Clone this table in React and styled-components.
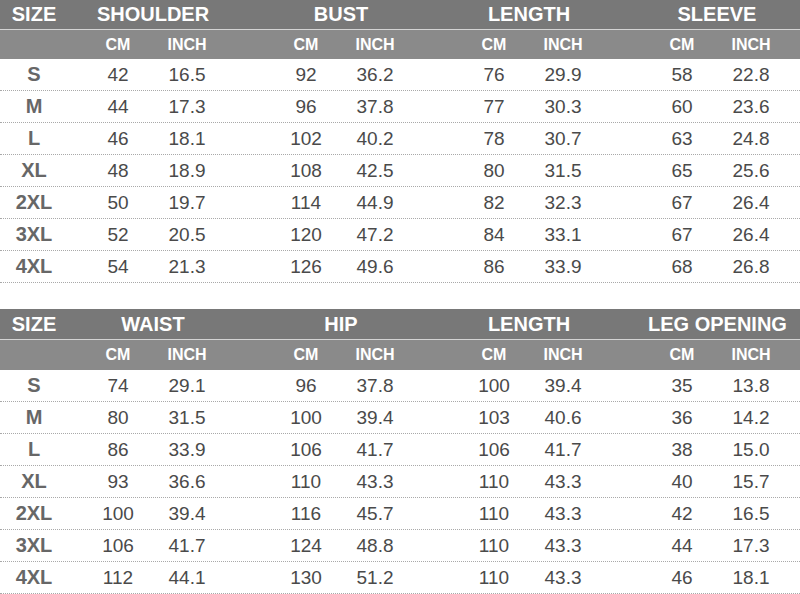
import React from "react";
import styled, { createGlobalStyle } from "styled-components";

const GlobalStyle = createGlobalStyle`
  html, body {
    margin: 0;
    padding: 0;
    background: #ffffff;
  }
  body {
    width: 800px;
    height: 594px;
    overflow: hidden;
    font-family: "Liberation Sans", Arial, sans-serif;
  }
`;

const Page = styled.div`
  width: 800px;
  overflow: hidden;
  display: flex;
  flex-direction: column;
  gap: 26px;
`;

const Table = styled.div`
  display: flex;
  flex-direction: column;
`;

const TitleRow = styled.div`
  display: flex;
  align-items: center;
  height: ${p => p.$h}px;
  background: #787878;
  color: #ffffff;
  font-weight: bold;
  font-size: 20px;
  border-bottom: 1px solid #d4d4d4;
`;

const UnitRow = styled.div`
  display: flex;
  align-items: center;
  height: ${p => p.$h}px;
  background: #8a8a8a;
  color: #ffffff;
  font-weight: bold;
  font-size: 16px;
`;

const DataRow = styled.div`
  display: flex;
  align-items: center;
  height: 32px;
  box-sizing: border-box;
  border-bottom: 1px dotted #a9a9a9;
  color: #4a4a4a;
  font-size: 19px;
`;

const SizeCell = styled.div`
  flex: 0 0 68px;
  text-align: center;
  font-weight: bold;
  color: ${p => (p.$head ? "#ffffff" : "#676767")};
  font-size: 20px;
`;

const Group = styled.div`
  flex: 0 0 188px;
  display: flex;
  padding-left: 16px;
  box-sizing: border-box;
`;

const GroupTitle = styled.div`
  width: 138px;
  text-align: center;
  white-space: nowrap;
`;

const Cell = styled.div`
  flex: 0 0 ${p => (p.$inch ? 70 : 68)}px;
  text-align: center;
`;

const tables = [
  {
    top: 29,
    groups: ["SHOULDER", "BUST", "LENGTH", "SLEEVE"],
    rows: [
      ["S", "42", "16.5", "92", "36.2", "76", "29.9", "58", "22.8"],
      ["M", "44", "17.3", "96", "37.8", "77", "30.3", "60", "23.6"],
      ["L", "46", "18.1", "102", "40.2", "78", "30.7", "63", "24.8"],
      ["XL", "48", "18.9", "108", "42.5", "80", "31.5", "65", "25.6"],
      ["2XL", "50", "19.7", "114", "44.9", "82", "32.3", "67", "26.4"],
      ["3XL", "52", "20.5", "120", "47.2", "84", "33.1", "67", "26.4"],
      ["4XL", "54", "21.3", "126", "49.6", "86", "33.9", "68", "26.8"]
    ]
  },
  {
    top: 30,
    groups: ["WAIST", "HIP", "LENGTH", "LEG OPENING"],
    rows: [
      ["S", "74", "29.1", "96", "37.8", "100", "39.4", "35", "13.8"],
      ["M", "80", "31.5", "100", "39.4", "103", "40.6", "36", "14.2"],
      ["L", "86", "33.9", "106", "41.7", "106", "41.7", "38", "15.0"],
      ["XL", "93", "36.6", "110", "43.3", "110", "43.3", "40", "15.7"],
      ["2XL", "100", "39.4", "116", "45.7", "110", "43.3", "42", "16.5"],
      ["3XL", "106", "41.7", "124", "48.8", "110", "43.3", "44", "17.3"],
      ["4XL", "112", "44.1", "130", "51.2", "110", "43.3", "46", "18.1"]
    ]
  }
];

const SizeTable = ({ table }) => (
  <Table>
    <TitleRow $h={table.top}>
      <SizeCell $head>SIZE</SizeCell>
      {table.groups.map(g => (
        <Group key={g}>
          <GroupTitle>{g}</GroupTitle>
        </Group>
      ))}
    </TitleRow>
    <UnitRow $h={table.top}>
      <SizeCell $head />
      {table.groups.map(g => (
        <Group key={g}>
          <Cell>CM</Cell>
          <Cell $inch>INCH</Cell>
        </Group>
      ))}
    </UnitRow>
    {table.rows.map(row => (
      <DataRow key={row[0]}>
        <SizeCell>{row[0]}</SizeCell>
        {[0, 1, 2, 3].map(i => (
          <Group key={i}>
            <Cell>{row[1 + i * 2]}</Cell>
            <Cell $inch>{row[2 + i * 2]}</Cell>
          </Group>
        ))}
      </DataRow>
    ))}
  </Table>
);

export default function App() {
  return (
    <Page>
      <GlobalStyle />
      {tables.map((t, i) => (
        <SizeTable key={i} table={t} />
      ))}
    </Page>
  );
}
